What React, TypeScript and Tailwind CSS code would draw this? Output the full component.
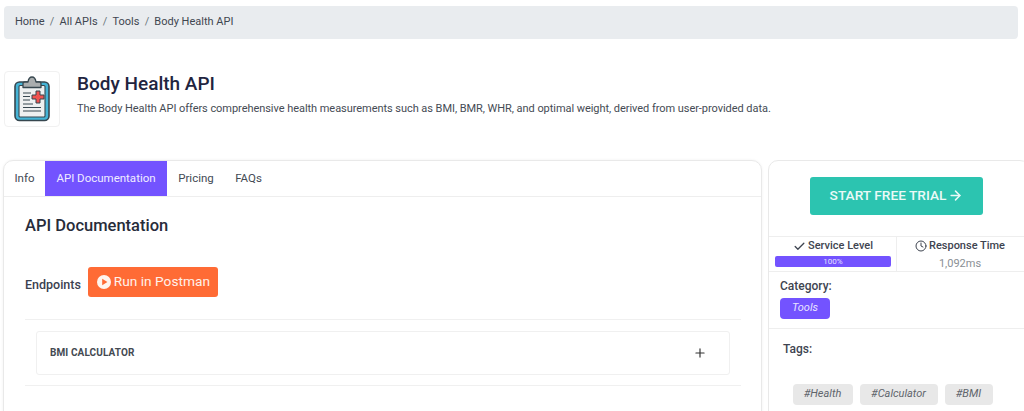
import { Check, Clock, Plus, ArrowRight } from "lucide-react";

function Logo() {
  return (
    <svg width="36" height="46" viewBox="0 0 36 46" fill="none">
      <rect x="1" y="6" width="34" height="38.5" rx="4.5" fill="#45b4d6" stroke="#37474f" strokeWidth="1.6" />
      <rect x="5" y="9.5" width="26" height="31.5" rx="1" fill="#eef0f0" stroke="#37474f" strokeWidth="1.1" />
      <path d="M9 11.5V7.5c0-1 .8-1.5 1.8-1.5H14C14.5 2.8 16 1 18 1s3.5 1.8 4 5h3.2c1 0 1.8.5 1.8 1.5v4z" fill="#a9adae" stroke="#37474f" strokeWidth="1.3" strokeLinejoin="round" />
      <path d="M9 17h8M9 20.5h7M9 24h7M9 28h10M9 31.5h18M9 35h18" stroke="#37474f" strokeWidth="1.1" />
      <path d="M22 15h4v4h4v4h-4v4h-4v-4h-4v-4h4z" fill="#ef5350" stroke="#37474f" strokeWidth="1" strokeLinejoin="round" />
    </svg>
  );
}

export default function App() {
  return (
    <div className="h-[411px] w-[1024px] overflow-hidden bg-white font-['Roboto',sans-serif] text-[#212529]">
      <div className="pt-[6px] pl-[4px] pr-[6px]">
        <nav className="flex h-[33px] items-center gap-[5.2px] rounded-[4px] bg-[#e9ecef] px-[11px] text-[11px] text-[#3f4650]">
          <span>Home</span>
          <span className="text-[#6c757d]">/</span>
          <span>All APIs</span>
          <span className="text-[#6c757d]">/</span>
          <span>Tools</span>
          <span className="text-[#6c757d]">/</span>
          <span>Body Health API</span>
        </nav>
      </div>

      <header className="mt-[32px] flex pl-[4px]">
        <div className="flex h-[56px] w-[56px] items-center justify-center rounded-[4px] border border-[#f1f1f1]">
          <Logo />
        </div>
        <div className="ml-[17px]">
          <h1 className="mt-[1px] text-[19px] leading-[24px] font-medium text-[#1f2540]">Body Health API</h1>
          <p className="mt-[5px] text-[11px] leading-[16px] tracking-[-0.05px] text-[#454b54]">
            The Body Health API offers comprehensive health measurements such as BMI, BMR, WHR, and optimal weight, derived from user-provided data.
          </p>
        </div>
      </header>

      <main className="mt-[33px] flex pl-[3px]">
        <section className="h-[260px] w-[759px] shrink-0 rounded-t-[10px] border-[1.5px] border-[#e9e9e9] shadow-[0_0_3px_rgba(0,0,0,0.06)]">
          <div className="flex h-[36px] items-stretch border-b-[1.5px] border-[#eeeeee] text-[11.5px] text-[#434a54]">
            <span className="flex w-[41px] items-center justify-center">Info</span>
            <span className="flex w-[122px] items-center justify-center bg-[#7353ff] text-[#f0edff]">API Documentation</span>
            <span className="flex w-[58px] items-center justify-center">Pricing</span>
            <span className="flex w-[47px] items-center justify-center">FAQs</span>
          </div>
          <div className="px-[20.5px]">
            <h2 className="mt-[18px] ml-[0.5px] text-[16.5px] leading-[22px] font-medium text-[#272c3a]">API Documentation</h2>
            <div className="mt-[30px] flex items-center">
              <span className="mt-[7px] ml-[0.5px] text-[12.5px] font-medium text-[#3a4150]">Endpoints</span>
              <span className="ml-[7.5px] flex h-[30px] w-[130px] items-center justify-center gap-[3px] rounded-[3px] bg-[#ff6b35] pb-[1px] text-[13.7px] text-[#fff1ea]">
                <svg width="14" height="14" viewBox="0 0 14 14">
                  <circle cx="7" cy="7" r="7" fill="#fff5ef" />
                  <path d="M5.2 3.8v6.4L10.4 7z" fill="#ff6b35" />
                </svg>
                Run in Postman
              </span>
            </div>
            <div className="mt-[22px] border-y border-[#f0f0f0] px-[11px] py-[10.5px]">
              <div className="flex h-[44px] items-center justify-between rounded-[3px] border border-[#f0f0f0] pr-[22px] pl-[13.5px]">
                <span className="text-[10px] font-bold tracking-[0.1px] text-[#444a52]">BMI CALCULATOR</span>
                <Plus size={14} strokeWidth={2} className="text-[#333]" />
              </div>
            </div>
          </div>
        </section>

        <aside className="ml-[6px] h-[260px] w-[262px] shrink-0 rounded-t-[10px] border-[1.5px] border-[#e9e9e9]">
          <div className="flex h-[75px] justify-center pt-[16px]">
            <span className="ml-[-5px] flex h-[38px] w-[173px] items-center justify-center gap-[2px] rounded-[3px] bg-[#2cc4b0] pb-[1px] text-[13.7px] font-medium text-[#eafaf7]">
              START FREE TRIAL
              <ArrowRight size={15} strokeWidth={2.4} />
            </span>
          </div>
          <div className="flex h-[36px] border-y border-[#eeeeee]">
            <div className="w-[128px] shrink-0 border-r border-[#eeeeee] pl-[6px] pr-[5px] pt-[2px]">
              <div className="flex h-[14px] items-center justify-center gap-[2px] text-[11px] font-medium text-[#3e4450]">
                <Check size={13} strokeWidth={2.4} />
                Service Level
              </div>
              <div className="mt-[3px] flex h-[11px] items-center justify-center rounded-[2px] bg-[#7353ff] text-[8px] text-[#e6e0ff]">100%</div>
            </div>
            <div className="flex-1 pr-[6px] pt-[2px] text-center">
              <div className="flex h-[14px] items-center justify-center gap-[2px] text-[11px] font-medium text-[#3e4450]">
                <Clock size={12} strokeWidth={2} />
                Response Time
              </div>
              <div className="mt-[4px] text-[11px] leading-[14px] text-[#8a8f95]">1,092ms</div>
            </div>
          </div>
          <div className="h-[57px] border-b border-[#eeeeee] pl-[11px] pt-[6px]">
            <div className="text-[12px] leading-[16px] font-medium text-[#3e4450]">Category:</div>
            <span className="mt-[4px] flex h-[21px] w-[50px] items-center justify-center rounded-[4px] bg-[#7353ff] text-[11px] text-[#e9e4ff] italic">Tools</span>
          </div>
          <div className="pl-[14px] pt-[12px]">
            <div className="text-[12px] leading-[16px] font-medium text-[#3e4450]">Tags:</div>
            <div className="mt-[27px] ml-[9.5px] flex gap-[7px] text-[11px] text-[#60656c] italic">
              <span className="flex h-[21px] w-[60px] items-center justify-center rounded-[4px] bg-[#e8e8e8]">#Health</span>
              <span className="flex h-[21px] w-[78px] items-center justify-center rounded-[4px] bg-[#e8e8e8]">#Calculator</span>
              <span className="flex h-[21px] w-[48px] items-center justify-center rounded-[4px] bg-[#e8e8e8]">#BMI</span>
            </div>
          </div>
        </aside>
      </main>
    </div>
  );
}
